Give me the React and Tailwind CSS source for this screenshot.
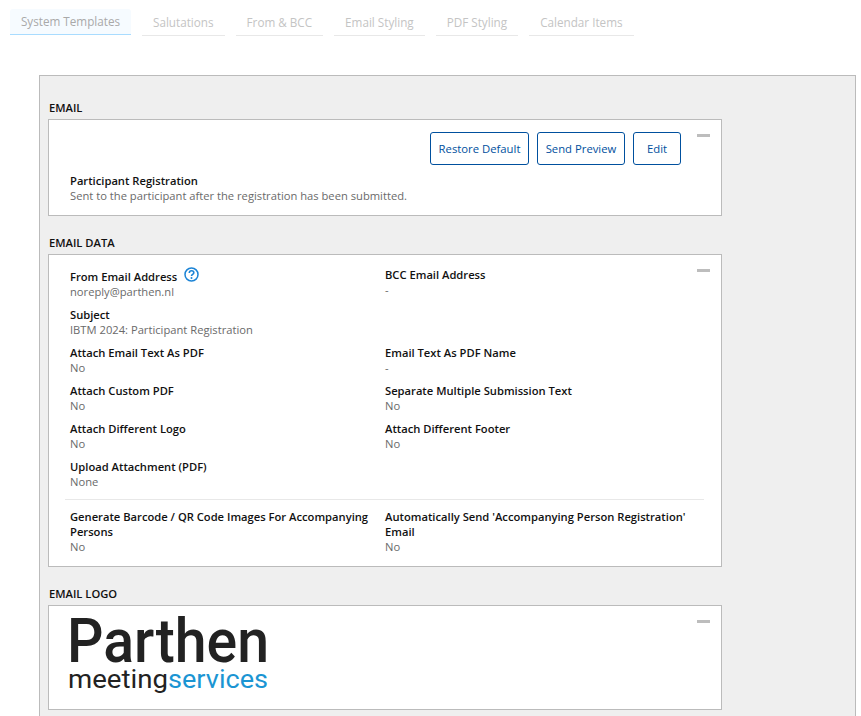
import React from 'react';

const tabs = ['Salutations', 'From & BCC', 'Email Styling', 'PDF Styling', 'Calendar Items'];

function Minus() {
  return <span className="absolute right-[11px] top-[14px] h-[3px] w-[13px] bg-[#bdbdbd]" />;
}

function Field({ label, value, children, className = '' }) {
  return (
    <div className={`w-[315px] pr-[10px] ${className}`}>
      <div className="text-[11.2px] leading-[15px] font-semibold text-[#111]">{label}{children}</div>
      <div className="text-[11.2px] leading-[15px] text-[#6a6a6a]">{value}</div>
    </div>
  );
}

function HelpIcon() {
  return (
    <svg className="ml-[7px] inline-block align-[-1px]" width="15" height="15" viewBox="0 0 15 15" fill="none">
      <circle cx="7.5" cy="7.5" r="6.5" stroke="#1c84d6" strokeWidth="1.5" />
      <path d="M5.3 5.9c0-1.3 1-2.2 2.3-2.2s2.2.8 2.2 2c0 1.7-2.3 1.6-2.3 3.3" stroke="#1c84d6" strokeWidth="1.6" />
      <circle cx="7.5" cy="11.1" r="1" fill="#1c84d6" />
    </svg>
  );
}

function Logo() {
  return (
    <svg className="overflow-visible font-['Roboto',sans-serif]" width="208" height="90" viewBox="0 0 208 90">
      <text x="2" y="56" fontSize="62" fontWeight="500" fill="#222" textLength="202" lengthAdjust="spacingAndGlyphs">Parthen</text>
      <text x="3" y="82" fontSize="26" fill="#222" textLength="100" lengthAdjust="spacingAndGlyphs">meeting</text>
      <text x="103" y="82" fontSize="26" fill="#1b95d3" textLength="100" lengthAdjust="spacingAndGlyphs">services</text>
    </svg>
  );
}

function Button({ children, className = '' }) {
  return (
    <button className={`h-[33px] rounded-[3px] border border-[#00509e] bg-white pt-[1px] text-[11.3px] text-[#00509e] ${className}`}>
      {children}
    </button>
  );
}

function Heading({ children, className = '' }) {
  return <h2 className={`pl-[1px] text-[11.2px] leading-[15px] font-semibold text-[#111] ${className}`}>{children}</h2>;
}

export default function App() {
  return (
    <div className="h-[716px] overflow-hidden bg-white font-['Open_Sans',sans-serif]">
      <div className="flex items-start gap-[11px] pl-[10px] pt-[9px]">
        <div className="flex h-[26px] w-[121px] items-center justify-center rounded-t-[3px] border-b border-[#a9dcff] bg-[#f6fbff] text-[11.7px] text-[#a9a9a9]">
          System Templates
        </div>
        {tabs.map((t) => (
          <div key={t} className="mt-[1px] flex h-[26px] items-center border-b border-[#e8e8e8] px-[11px] text-[11.7px] text-[#c4c4c4]">
            {t}
          </div>
        ))}
      </div>

      <div className="ml-[39px] mt-[39px] w-[817px] border border-[#bbb] bg-[#efefef] px-[8px] pt-[24px] pb-[20px]">
        <Heading className="mb-[4px]">EMAIL</Heading>
        <div className="relative h-[97px] w-[674px] border border-[#bbb] bg-white pt-[12px] pl-[21px]">
          <Minus />
          <div className="flex justify-end gap-[8px] pr-[40px]">
            <Button className="w-[99px]">Restore Default</Button>
            <Button className="w-[88px]">Send Preview</Button>
            <Button className="w-[48px]">Edit</Button>
          </div>
          <div className="mt-[8px] text-[11.2px] leading-[15px] font-semibold text-[#111]">Participant Registration</div>
          <div className="text-[11.2px] leading-[15px] text-[#6a6a6a]">Sent to the participant after the registration has been submitted.</div>
        </div>

        <Heading className="mt-[19px] mb-[4px]">EMAIL DATA</Heading>
        <div className="relative h-[313px] w-[674px] border border-[#bbb] bg-white pt-[12px]">
          <Minus />
          <div className="flex flex-wrap gap-y-[8px] pl-[21px]">
            <Field label="From Email Address" value="noreply@parthen.nl"><HelpIcon /></Field>
            <Field label="BCC Email Address" value="-" />
            <Field label="Subject" value="IBTM 2024: Participant Registration" className="w-full" />
            <Field label="Attach Email Text As PDF" value="No" />
            <Field label="Email Text As PDF Name" value="-" />
            <Field label="Attach Custom PDF" value="No" />
            <Field label="Separate Multiple Submission Text" value="No" />
            <Field label="Attach Different Logo" value="No" />
            <Field label="Attach Different Footer" value="No" />
            <Field label="Upload Attachment (PDF)" value="None" className="w-full" />
          </div>
          <div className="mt-[10px] ml-[16px] w-[639px] border-t border-[#e8e8e8]" />
          <div className="flex pl-[21px] pt-[9px]">
            <Field label="Generate Barcode / QR Code Images For Accompanying Persons" value="No" />
            <Field label="Automatically Send 'Accompanying Person Registration' Email" value="No" />
          </div>
        </div>

        <Heading className="mt-[19px] mb-[4px]">EMAIL LOGO</Heading>
        <div className="relative h-[105px] w-[674px] border border-[#bbb] bg-white pl-[16px]">
          <Minus />
          <Logo />
        </div>
      </div>
    </div>
  );
}
